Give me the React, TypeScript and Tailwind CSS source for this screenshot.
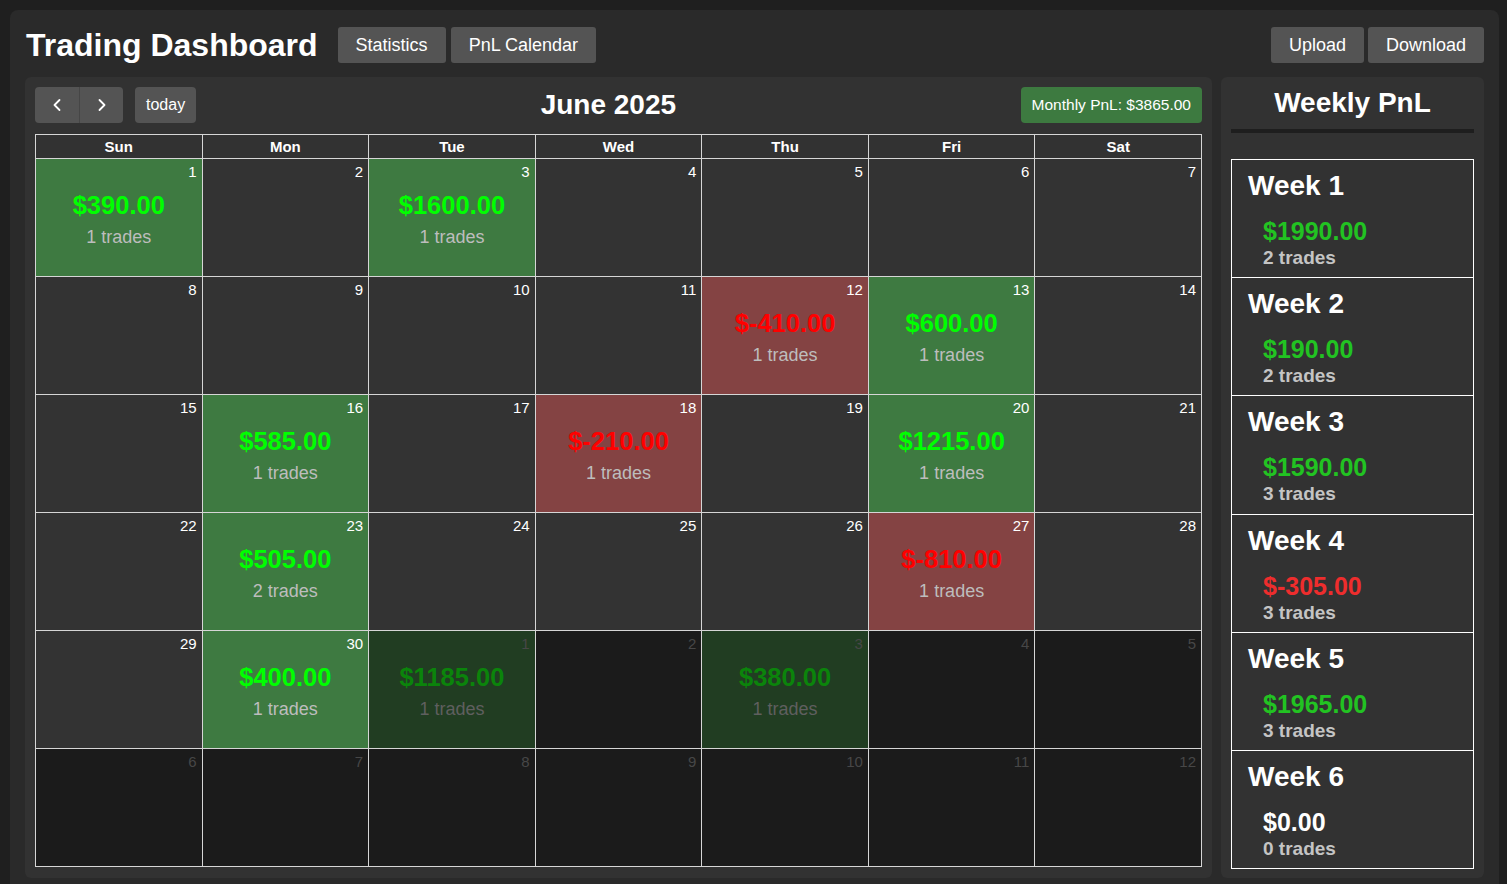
import React from "react";
import { ChevronLeft, ChevronRight } from "lucide-react";

type Day = { d: number; other: boolean; pnl?: number; trades?: number };

const june: Record<number, [number, number]> = {
  1: [390, 1],
  3: [1600, 1],
  12: [-410, 1],
  13: [600, 1],
  16: [585, 1],
  18: [-210, 1],
  20: [1215, 1],
  23: [505, 2],
  27: [-810, 1],
  30: [400, 1],
};
const july: Record<number, [number, number]> = {
  1: [1185, 1],
  3: [380, 1],
};

const days: Day[] = [];
for (let i = 1; i <= 30; i++) {
  const e = june[i];
  days.push({ d: i, other: false, pnl: e?.[0], trades: e?.[1] });
}
for (let i = 1; i <= 12; i++) {
  const e = july[i];
  days.push({ d: i, other: true, pnl: e?.[0], trades: e?.[1] });
}

const weeks = [
  { n: 1, pnl: 1990, t: 2 },
  { n: 2, pnl: 190, t: 2 },
  { n: 3, pnl: 1590, t: 3 },
  { n: 4, pnl: -305, t: 3 },
  { n: 5, pnl: 1965, t: 3 },
  { n: 6, pnl: 0, t: 0 },
];

const fmt = (v: number) => `$${v.toFixed(2)}`;

function Cell({ day }: { day: Day }) {
  const has = day.pnl !== undefined;
  let bg = day.other ? "bg-[#1b1b1b]" : "bg-[#333333]";
  if (has) {
    if (day.pnl! >= 0) bg = day.other ? "bg-[#213d22]" : "bg-[#3e7a41]";
    else bg = day.other ? "bg-[#3f2222]" : "bg-[#844343]";
  }
  const dateColor = day.other ? "text-[#474747]" : "text-white";
  const amtColor = day.other
    ? day.pnl! >= 0
      ? "text-[#0b840b]"
      : "text-[#880000]"
    : day.pnl! >= 0
    ? "text-[#00ff00]"
    : "text-[#ff0000]";
  const tradeColor = day.other ? "text-[#5f5f5f]" : "text-[#bdbdbd]";
  return (
    <div className={`h-[118px] border-r border-b border-[#d6d6d6] flex flex-col ${bg}`}>
      <div className={`pt-[2px] pr-[5px] text-right text-[15px] leading-[22px] ${dateColor}`}>{day.d}</div>
      {has && (
        <>
          <div className={`mt-[7px] text-center text-[25.5px] leading-[30px] font-bold ${amtColor}`}>{fmt(day.pnl!)}</div>
          <div className={`mt-[6px] text-center text-[18px] leading-[22px] ${tradeColor}`}>{day.trades} trades</div>
        </>
      )}
    </div>
  );
}

export default function App() {
  const font = { fontFamily: '"Liberation Sans", Arial, Helvetica, sans-serif' };
  return (
    <div className="h-[884px] overflow-hidden bg-[#1f1f1f] pt-[10px]" style={font}>
      <div className="ml-[10px] mr-[8px] rounded-[8px] bg-[#2a2a2a] px-[15px] pt-[17px] pb-[15px] text-white">
        {/* Header */}
        <div className="flex items-center h-[36px]">
          <h1 className="text-[32px] font-bold leading-[36px] ml-[1px]">Trading Dashboard</h1>
          <div className="ml-[20px] flex gap-[5px]">
            <button className="h-[36px] px-[18px] rounded-[3px] bg-[#545454] text-[18px] text-white">Statistics</button>
            <button className="h-[36px] px-[18px] rounded-[3px] bg-[#545454] text-[18px] text-white">PnL Calendar</button>
          </div>
          <div className="ml-auto flex gap-[4px]">
            <button className="h-[36px] px-[18px] rounded-[3px] bg-[#545454] text-[18px] text-white">Upload</button>
            <button className="h-[36px] px-[18px] rounded-[3px] bg-[#545454] text-[18px] text-white">Download</button>
          </div>
        </div>

        <div className="mt-[14px] flex gap-[9px]">
          {/* Calendar panel */}
          <div className="flex-1 rounded-[6px] bg-[#323232] p-[10px] pb-[11px]">
            <div className="flex items-center justify-between h-[36px]">
              <div className="flex items-center">
                <div className="flex h-[36px] rounded-[4px] overflow-hidden bg-[#545454]">
                  <button className="w-[45px] flex items-center justify-center border-r border-[#464646]">
                    <ChevronLeft size={20} strokeWidth={2.2} color="#ffffff" />
                  </button>
                  <button className="w-[43px] flex items-center justify-center">
                    <ChevronRight size={20} strokeWidth={2.2} color="#ffffff" />
                  </button>
                </div>
                <button className="ml-[12px] h-[36px] px-[11px] rounded-[4px] bg-[#545454] text-[16px] text-white">today</button>
              </div>
              <div className="text-center text-[28px] font-bold leading-[36px]">June 2025</div>
              <div className="h-[36px] px-[11px] rounded-[4px] bg-[#3d7a40] text-[15.5px] flex items-center">Monthly PnL: $3865.00</div>
            </div>

            <div className="mt-[11px] border-l border-t border-[#d6d6d6]">
              <div className="grid grid-cols-7">
                {["Sun", "Mon", "Tue", "Wed", "Thu", "Fri", "Sat"].map((d) => (
                  <div key={d} className="h-[24px] border-r border-b border-[#d6d6d6] text-center text-[15px] font-bold leading-[23px]">
                    {d}
                  </div>
                ))}
              </div>
              <div className="grid grid-cols-7">
                {days.map((day, i) => (
                  <Cell key={i} day={day} />
                ))}
              </div>
            </div>
          </div>

          {/* Weekly panel */}
          <div className="w-[263px] rounded-[6px] bg-[#323232] px-[10px] pt-[11px] pb-[8px] flex flex-col">
            <div className="text-center text-[28px] font-bold leading-[30px]">Weekly PnL</div>
            <div className="mt-[11px] h-[4px] bg-[#1e1e1e]"></div>
            <div className="mt-[26px] flex flex-col border-b border-white">
              {weeks.map((w) => {
                const c = w.pnl > 0 ? "text-[#22c322]" : w.pnl < 0 ? "text-[#ee2d2d]" : "text-white";
                return (
                  <div key={w.n} className="h-[118.2px] border-x border-t border-white px-[16px] pt-[7px]">
                    <div className="text-[28px] font-bold leading-[38px]">Week {w.n}</div>
                    <div className="pl-[15px]">
                      <div className={`mt-[11px] text-[25px] font-bold leading-[30px] ${c}`}>{fmt(w.pnl)}</div>
                      <div className="mt-[1px] text-[19px] font-bold leading-[22px] text-[#c4c4c4]">{w.t} trades</div>
                    </div>
                  </div>
                );
              })}
            </div>
          </div>
        </div>
      </div>
    </div>
  );
}
